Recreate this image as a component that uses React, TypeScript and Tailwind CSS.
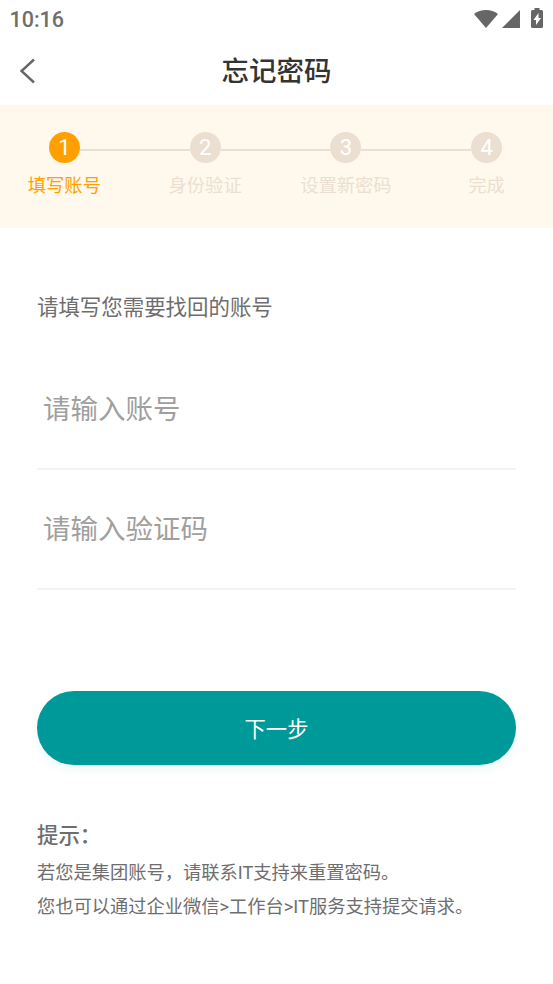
import React, { useState } from 'react';

const steps = [
  { id: 1, name: '填写账号' },
  { id: 2, name: '身份验证' },
  { id: 3, name: '设置新密码' },
  { id: 4, name: '完成' }
];

const StatusBar: React.FC = () => (
  <div className="flex h-[38px] items-center justify-between pl-[9.500px] pr-[10px] text-[#666]">
    <span className="pt-[2px] font-[Roboto] text-[21.5px] font-medium leading-none text-[#6e6e6e]">10:16</span>
    <div className="flex items-center">
      <svg className="h-[18px] w-[24px]" viewBox="0 0 24 18" fill="currentColor">
        <path d="M12 18 0 4C3.400 1.300 7.500 0 12 0s8.600 1.300 12 4z" />
      </svg>
      <svg className="ml-[4px] h-[18px] w-[18px]" viewBox="0 0 18 18" fill="currentColor">
        <path d="M18 0v18H0z" />
      </svg>
      <svg className="ml-[11px] -mt-[2px] h-[20px] w-[12px]" viewBox="0 0 12 20">
        <path fill="currentColor" d="M3.500 0h5v2h2q1.500 0 1.500 1.500v15q0 1.500-1.500 1.500h-9Q0 20 0 18.500v-15Q0 2 1.500 2h2z" />
        <path fill="#fff" d="M7.500 5v5H10l-5 7v-5H2.500z" />
      </svg>
    </div>
  </div>
);

const App: React.FC = () => {
  const [account, setAccount] = useState('');
  const [code, setCode] = useState('');
  const currentStep = 1;

  return (
    <div className="min-h-[984px] w-[553px] overflow-hidden bg-white font-[Roboto,'Noto_Sans_CJK_SC',sans-serif] text-[#6e6e6e]">
      <StatusBar />

      {/* Header */}
      <header className="grid h-[67px] grid-cols-[60px_1fr_60px] items-center">
        <button className="-mt-[2px] pl-[20px]" aria-label="返回">
          <svg className="h-[26px] w-[16px]" viewBox="0 0 16 26" fill="none" stroke="#666" strokeWidth="2.400">
            <path d="M14 1.500 1.500 13 14 24.500" />
          </svg>
        </button>
        <h1 className="text-center text-[27.500px] font-medium leading-none text-[#333]">忘记密码</h1>
      </header>

      {/* Steps */}
      <div className="-ml-[6px] -mr-[4px] grid h-[123px] grid-cols-4 bg-[#fff8ec] pt-[27px]">
        {steps.map((step) => (
          <div
            key={step.id}
            className={`flex flex-col items-center ${step.id === currentStep ? 'text-[#ff9f00]' : 'text-[#ebdfd2]'}`}
          >
            <div className="flex w-full items-center">
              <div className={`mt-[4px] h-[2px] flex-1 ${step.id === 1 ? '' : 'bg-[#ebdfd2]'}`} />
              <div
                className={`flex h-[31px] w-[31px] items-center justify-center rounded-full pt-[1px] text-[22px] leading-none text-white ${
                  step.id === currentStep ? 'bg-[#ff9f00]' : 'bg-[#ebdfd2]'
                }`}
              >
                {step.id}
              </div>
              <div className={`mt-[4px] h-[2px] flex-1 ${step.id === 4 ? '' : 'bg-[#ebdfd2]'}`} />
            </div>
            <span className="mt-[9px] text-[18.300px] leading-[28px]">{step.name}</span>
          </div>
        ))}
      </div>

      {/* Form */}
      <main className="px-[37px] pt-[63px]">
        <p className="text-[21.450px] leading-[34px]">请填写您需要找回的账号</p>
        <input
          className="mt-[24px] block h-[121px] w-full border-b-2 border-[#f3f3f3] px-[6px] pt-[2px] text-[27.500px] outline-none placeholder:text-[#9f9f9f]"
          placeholder="请输入账号"
          value={account}
          onChange={(e) => setAccount(e.target.value)}
        />
        <input
          className="block h-[120px] w-full border-b-2 border-[#f3f3f3] px-[6px] pt-[1px] text-[27.500px] outline-none placeholder:text-[#9f9f9f]"
          placeholder="请输入验证码"
          value={code}
          onChange={(e) => setCode(e.target.value)}
        />
        <button className="mt-[101px] block h-[74px] w-full rounded-full bg-[#009999] pt-[3px] text-[21.300px] text-white shadow-[0_4px_10px_rgba(0,153,153,0.08)]">
          下一步
        </button>

        {/* Tips */}
        <div className="mt-[54px] text-[18.250px] leading-[34px]">
          <h2 className="text-[21.400px] font-medium">提示：</h2>
          <p className="mt-[3px]">若您是集团账号，请联系IT支持来重置密码。</p>
          <p>您也可以通过企业微信&gt;工作台&gt;IT服务支持提交请求。</p>
        </div>
      </main>
    </div>
  );
};

export default App;
